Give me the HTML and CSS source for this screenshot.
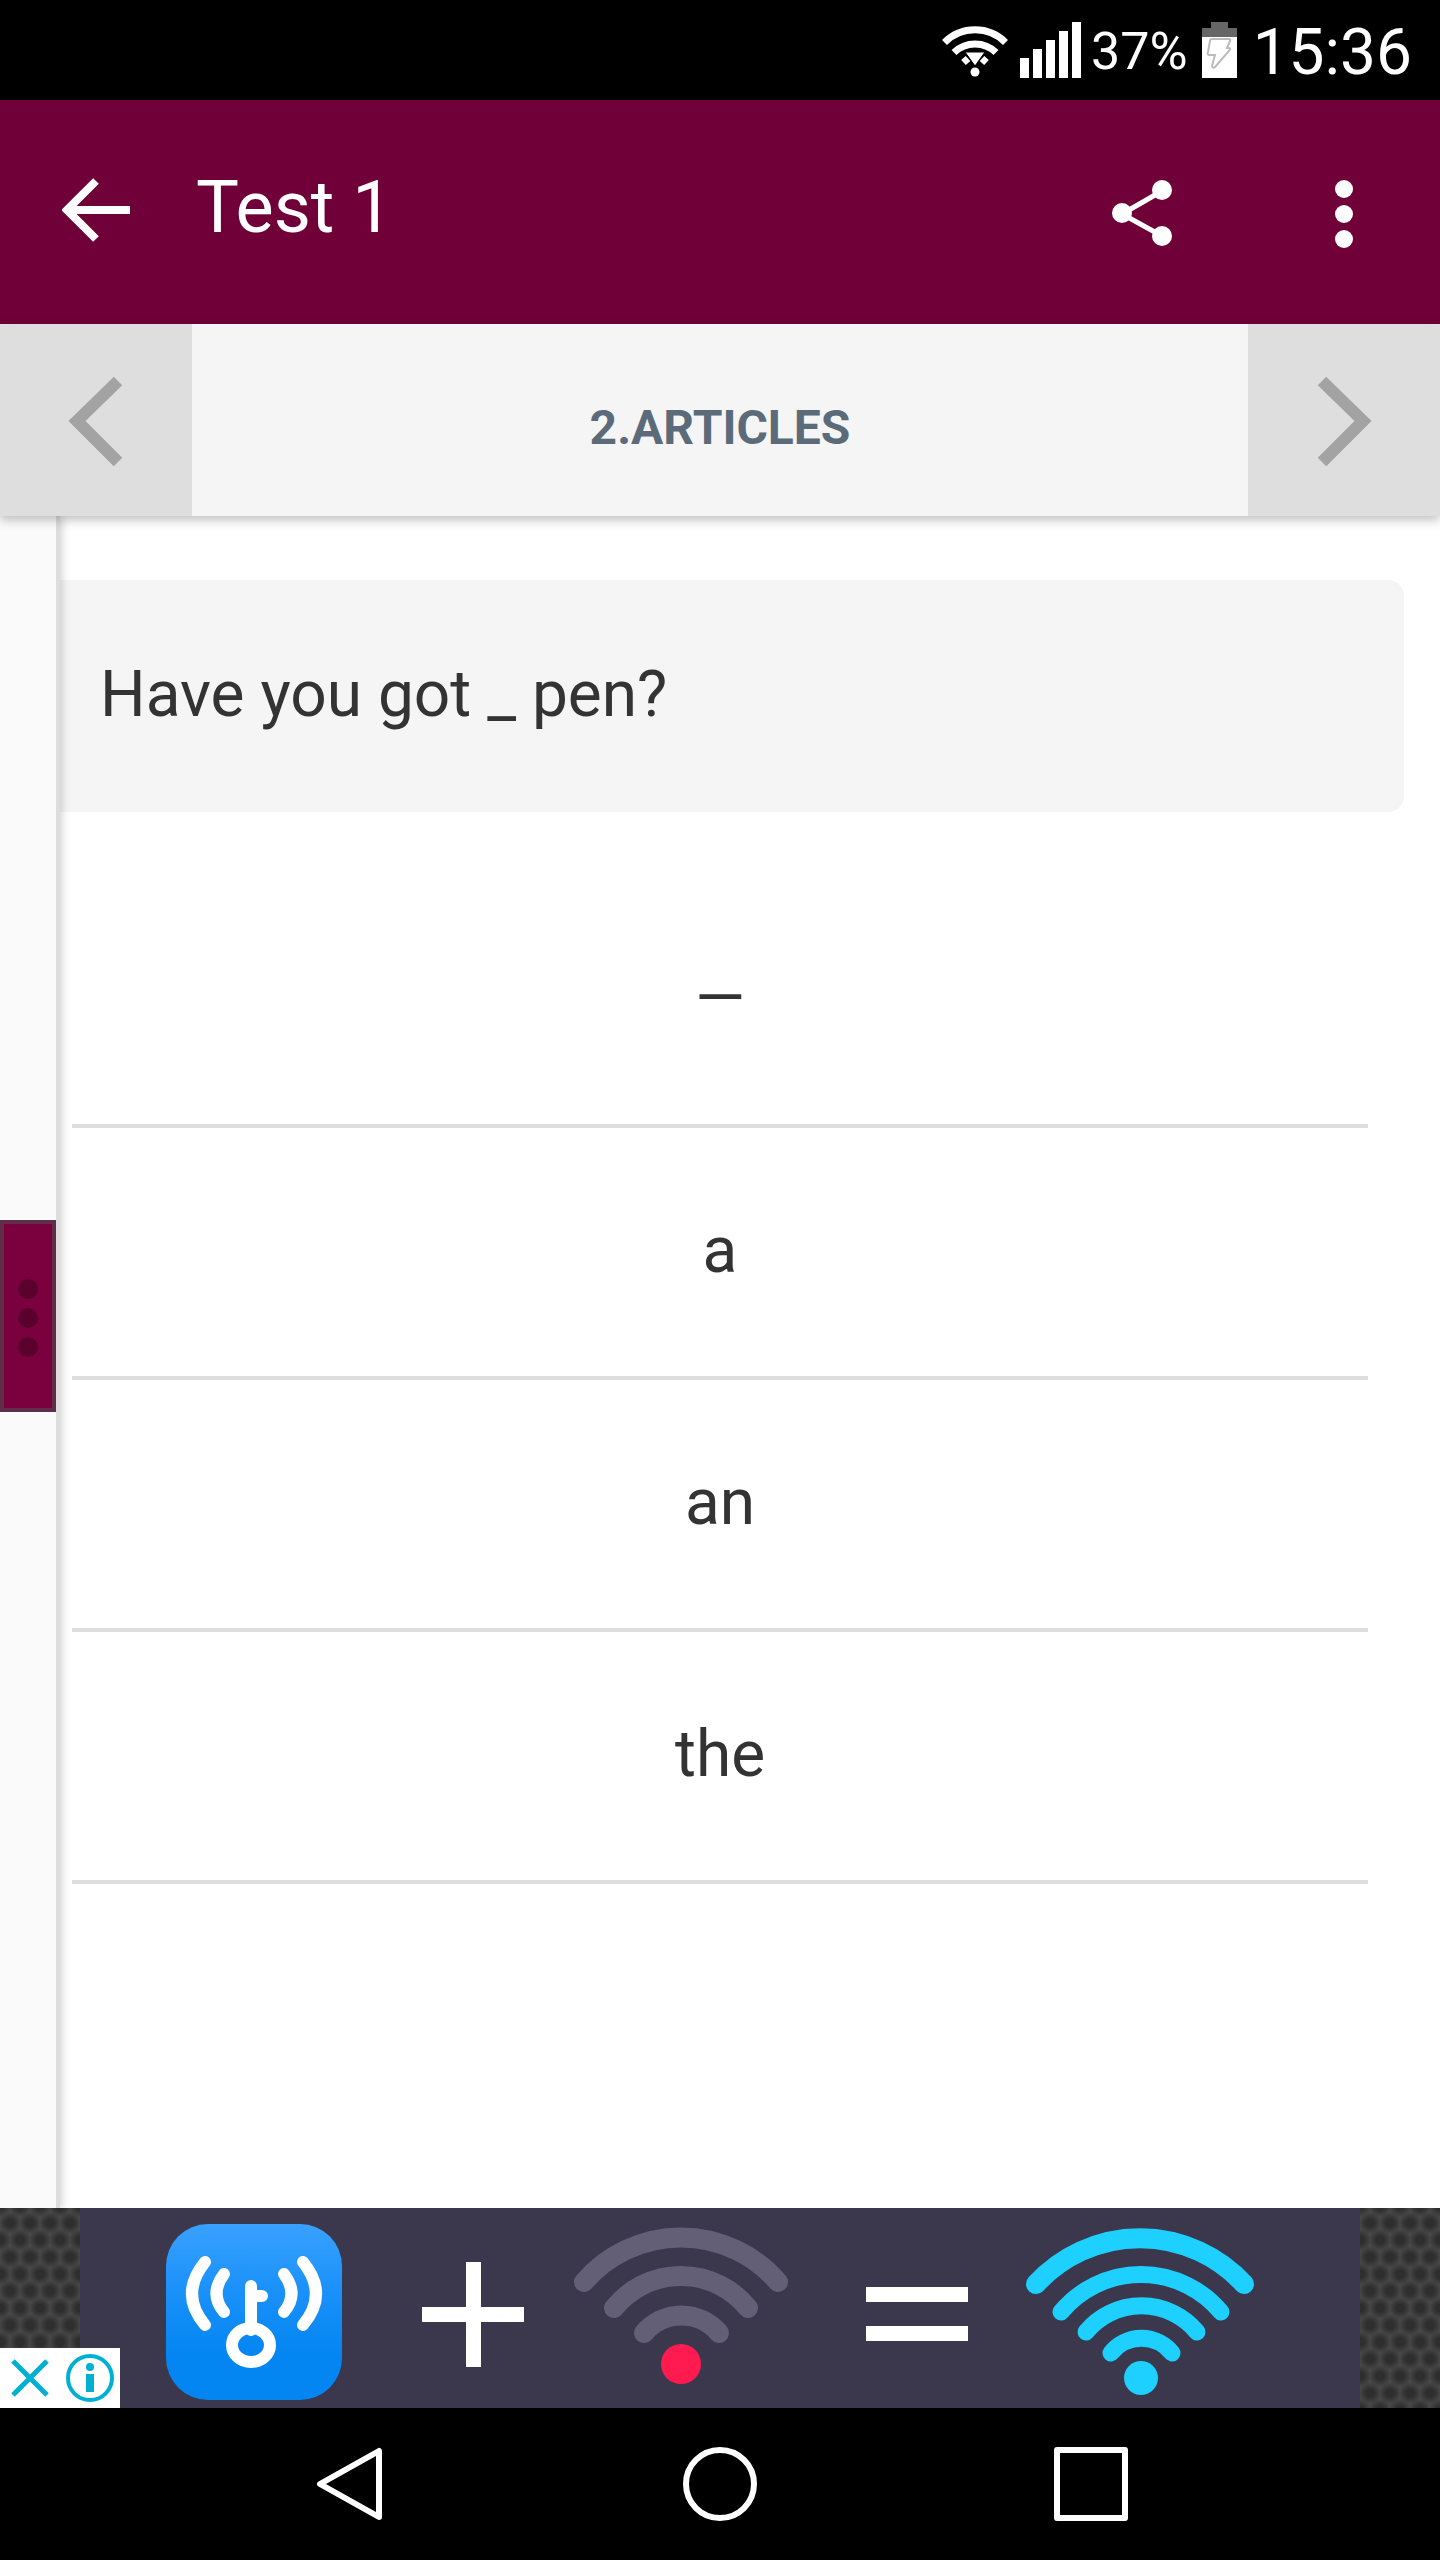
FILE: index.html
```html
<!DOCTYPE html>
<html lang="en">
<head>
<meta charset="utf-8">
<meta name="viewport" content="width=device-width, initial-scale=1">
<title>Test 1</title>
<link rel="stylesheet" href="styles.css">
</head>
<body>
<div class="status">
  <svg class="status-wifi" width="66" height="60" viewBox="0 0 66 60" aria-label="Wi-Fi">
    <g fill="none" stroke="#fff" stroke-width="7">
      <path d="M2.500 22.500A43 43 0 0 1 63.500 22.500"/>
      <path d="M12 32.500A30 30 0 0 1 54 32.500"/>
      <path d="M21.500 42.500L26 38.500M44.500 42.500L40 38.500"/>
    </g>
    <path d="M23 32h20L33 46z" fill="#fff" stroke="#000" stroke-width="1"/>
    <circle cx="33" cy="52" r="4.500" fill="#fff"/>
  </svg>
  <svg class="status-signal" width="61" height="57" viewBox="0 0 61 57" aria-label="Signal">
    <path fill="#fff" d="M0 36h9v20H0zM13 27h9v29h-9zM26 18h9v38h-9zM39 9h9v47h-9zM52 0h9v56h-9z"/>
  </svg>
  <span class="status-percent">37%</span>
  <svg class="status-battery" width="35" height="57" viewBox="0 0 35 57" aria-label="Battery charging">
    <path fill="#666" d="M9 0h17v6h9v9H0V6h9z"/>
    <path fill="#fff" d="M0 15h35v41H0z"/>
    <path d="M10 17h17q2 0 1 2l-3 7h2q2 0 0 3L13 45q-2 2-3-1l3-11H7q-2 0-1-3l2-11q0-2 2-2z" fill="none" stroke="#bbb" stroke-width="2"/>
  </svg>
  <span class="status-time">15:36</span>
</div>
<header class="appbar">
  <button class="icon-button back" aria-label="Back">
    <svg width="68" height="64" viewBox="0 0 68 64"><path d="M34 3L5 32l29 29M5 32h63" fill="none" stroke="#fff" stroke-width="8"/></svg>
  </button>
  <h1 class="title">Test 1</h1>
  <button class="icon-button action" aria-label="Share">
    <svg width="60" height="68" viewBox="0 0 60 68"><path d="M50 11L10 34l40 22" fill="none" stroke="#fff" stroke-width="5"/><g fill="#fff"><circle cx="50" cy="10" r="10"/><circle cx="10" cy="33" r="10"/><circle cx="50" cy="56" r="10"/></g></svg>
  </button>
  <button class="icon-button action" aria-label="More options">
    <svg width="18" height="68" viewBox="0 0 18 68" fill="#fff"><circle cx="9" cy="9" r="9"/><circle cx="9" cy="34" r="9"/><circle cx="9" cy="59" r="9"/></svg>
  </button>
</header>
<nav class="pager" aria-label="Questions">
  <button class="pager-button" aria-label="Previous">
    <svg width="56" height="92" viewBox="0 0 56 92"><path d="M50 6L9 46l41 41" fill="none" stroke="#a3a3a3" stroke-width="12"/></svg>
  </button>
  <h2 class="topic">2.ARTICLES</h2>
  <button class="pager-button" aria-label="Next">
    <svg width="56" height="92" viewBox="0 0 56 92"><path d="M6 6l41 40L6 87" fill="none" stroke="#a3a3a3" stroke-width="12"/></svg>
  </button>
</nav>
<div class="stage">
  <aside class="drawer">
    <button class="drawer-handle" aria-label="Open drawer">
      <svg width="20" height="78" viewBox="0 0 20 78" fill="#5a002d"><circle cx="10" cy="10" r="10"/><circle cx="10" cy="39" r="10"/><circle cx="10" cy="68" r="10"/></svg>
    </button>
  </aside>
  <main class="quiz">
    <p class="question">Have you got _ pen?</p>
    <div class="options">
      <button class="option">—</button>
      <button class="option">a</button>
      <button class="option">an</button>
      <button class="option">the</button>
    </div>
  </main>
</div>
<section class="ad" aria-label="Advertisement">
  <svg class="ad-banner" viewBox="0 0 1280 200">
    <defs>
      <linearGradient id="key-tile" x1="0" y1="0" x2="0" y2="1"><stop offset="0" stop-color="#39a1ff"/><stop offset="0.350" stop-color="#1c92fa"/><stop offset="0.750" stop-color="#0385f2"/><stop offset="1" stop-color="#0385f2"/></linearGradient>
    </defs>
    <rect width="1280" height="200" fill="#3b384d"/>
    <rect x="86" y="16" width="176" height="176" rx="42" fill="url(#key-tile)"/>
    <g fill="none" stroke="#fff" stroke-width="12" stroke-linecap="round">
      <path d="M125 54Q99 86 125 117M144 66Q129 86 144 104M223 54Q249 86 223 117M204 66Q219 86 204 104"/>
      <path d="M171 78v44M171 88h11"/>
      <ellipse cx="171" cy="137" rx="19" ry="17"/>
    </g>
    <path fill="#fff" d="M342 99h102v15H342zM386 54h15v105h-15zM786 79h102v15H786zM786 118h102v15H786z"/>
    <g fill="none" stroke="#625f76" stroke-width="20" stroke-linecap="round">
      <path d="M504 74A128 128 0 0 1 698 74"/>
      <path d="M534 100A86 86 0 0 1 668 100"/>
      <path d="M564 125A49 49 0 0 1 639 125"/>
    </g>
    <circle cx="601" cy="156" r="20" fill="#ff1a50"/>
    <g fill="none" stroke="#1dd0ff" stroke-linecap="round">
      <path d="M956 76A141 141 0 0 1 1164 76" stroke-width="20"/>
      <path d="M981 104A104 104 0 0 1 1141 104" stroke-width="17"/>
      <path d="M1006 124A72 72 0 0 1 1117 124" stroke-width="17"/>
      <path d="M1031 145A39 39 0 0 1 1092 145" stroke-width="17"/>
    </g>
    <circle cx="1061" cy="170" r="17" fill="#1dd0ff"/>
  </svg>
  <div class="ad-controls">
    <button class="ad-control" aria-label="Close ad"><svg width="38" height="38" viewBox="0 0 38 38"><path d="M2 2l34 34M36 2L2 36" stroke="#00b0d2" stroke-width="5"/></svg></button>
    <button class="ad-control" aria-label="Ad information"><svg width="48" height="48" viewBox="0 0 48 48"><circle cx="24" cy="24" r="22" fill="none" stroke="#00b0d2" stroke-width="4"/><circle cx="24" cy="13" r="4" fill="#00b0d2"/><path d="M20 20h8v18h-8z" fill="#00b0d2"/></svg></button>
  </div>
</section>
<nav class="system" aria-label="System">
  <button class="system-button" aria-label="Back"><svg width="76" height="76" viewBox="0 0 76 76"><path d="M67 5v66L8 38z"/></svg></button>
  <button class="system-button" aria-label="Home"><svg width="76" height="76" viewBox="0 0 76 76"><circle cx="38" cy="38" r="34"/></svg></button>
  <button class="system-button" aria-label="Recent apps"><svg width="76" height="76" viewBox="0 0 76 76"><path d="M5 4h68v68H5z"/></svg></button>
</nav>
</body>
</html>
```
FILE: styles.css
```css
* { box-sizing: border-box; }

body {
  margin: 0;
  min-height: 100vh;
  display: flex;
  flex-direction: column;
  font-family: Roboto, "Liberation Sans", sans-serif;
  background: #fff;
  color: #333;
}

button {
  margin: 0;
  padding: 0;
  border: 0;
  background: none;
  font: inherit;
  color: inherit;
}

svg { display: block; }

.status {
  display: flex;
  align-items: center;
  justify-content: flex-end;
  height: 100px;
  padding-right: 28px;
  background: #000;
  color: #fff;
}
.status-signal { margin: 0 10px 0 12px; }
.status-percent { padding-top: 4px; font-size: 52px; line-height: 60px; }
.status-battery { margin: 0 16px 0 14px; }
.status-time { padding-top: 6px; font-size: 64px; line-height: 72px; }

.appbar {
  display: flex;
  align-items: center;
  height: 224px;
  background: #700038;
  color: #fff;
}
.icon-button {
  display: grid;
  place-items: center;
  width: 192px;
  height: 192px;
}
.back { padding-bottom: 4px; }
.action { padding-top: 4px; }
.action + .action { margin-left: 10px; }
.title {
  flex: 1;
  margin: 0;
  padding: 0 0 8px 4px;
  font-size: 72px;
  line-height: 84px;
  font-weight: 400;
}

.pager {
  position: relative;
  z-index: 1;
  display: flex;
  height: 192px;
  background: #f5f5f5;
  box-shadow: 0 4px 10px rgba(0, 0, 0, 0.25);
}
.pager-button {
  display: grid;
  place-items: center;
  width: 192px;
  padding-top: 2px;
  background: #dedede;
}
.topic {
  flex: 1;
  margin: 0;
  padding-top: 16px;
  align-self: center;
  text-align: center;
  font-size: 48px;
  line-height: 56px;
  font-weight: 700;
  color: #5b6b79;
}

.stage {
  flex: 1;
  display: flex;
}
.drawer {
  position: relative;
  display: flex;
  flex-direction: column;
  justify-content: center;
  width: 60px;
  padding-bottom: 92px;
  border-right: 4px solid #ddd;
  background: #fafafa;
  box-shadow: 2px 0 8px rgba(0, 0, 0, 0.18);
}
.drawer-handle {
  display: grid;
  place-items: center;
  width: 56px;
  height: 192px;
  padding-top: 4px;
  border: 4px solid #5f2d49;
  background: #7b003e;
}
.quiz {
  flex: 1;
  padding: 64px 36px 0 0;
}
.question {
  margin: 0;
  padding: 75px 40px 77px;
  border-radius: 0 16px 16px 0;
  background: #f5f5f5;
  font-size: 64px;
  line-height: 80px;
}
.options {
  display: flex;
  flex-direction: column;
  margin: 64px 36px 0 12px;
}
.option {
  height: 252px;
  padding-bottom: 2px;
  border-bottom: 4px solid #ddd;
  font-size: 64px;
  line-height: 80px;
}

.ad {
  position: relative;
  display: flex;
  justify-content: center;
  background-color: #484848;
  background-image: radial-gradient(circle, #2e2e2e 4px, transparent 11px), radial-gradient(circle, #2e2e2e 4px, transparent 11px);
  background-size: 20px 34px;
  background-position: 0 -2px, 10px 15px;
}
.ad-banner { width: 1280px; max-width: 90%; }
.ad-controls {
  position: absolute;
  left: 0;
  bottom: 0;
  display: flex;
  width: 120px;
  height: 60px;
  background: #fff;
}
.ad-control {
  flex: 1;
  display: grid;
  place-items: center;
}

.system {
  display: flex;
  justify-content: center;
  gap: 180px;
  height: 152px;
  background: #000;
}
.system-button {
  display: grid;
  place-items: center;
  width: 190px;
}
.system-button svg {
  fill: none;
  stroke: #fff;
  stroke-width: 6;
  stroke-linejoin: round;
}
```
